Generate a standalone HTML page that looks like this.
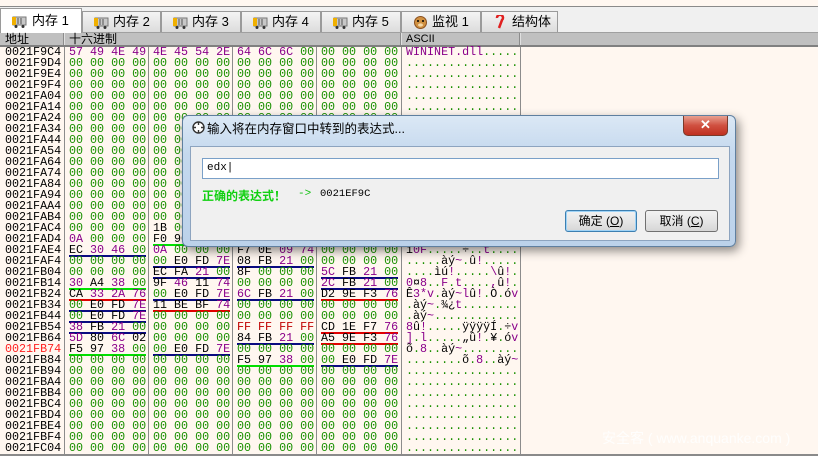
<!DOCTYPE html>
<html><head><meta charset="utf-8"><style>
*{margin:0;padding:0;box-sizing:border-box}
body{width:818px;height:456px;overflow:hidden;background:#fff7f0;position:relative;font-family:"Liberation Mono",monospace;font-size:11.7px}
.top{position:absolute;left:0;top:0;width:818px;height:7px;background:#fff7f0;border-bottom:1px solid #8a8a8a;overflow:hidden}
.tabbar{position:absolute;left:0;top:7px;width:818px;height:26px;background:#f0f0f0;border-bottom:1px solid #a0a0a0}
.tab{position:absolute;top:4px;height:21px;border:1px solid #9a9a9a;border-bottom:none;background:linear-gradient(#f4f4f4,#dcdcdc);font-family:"Liberation Sans","Noto Sans CJK SC",sans-serif;font-size:13px;line-height:20px;color:#000;padding-left:30px;white-space:nowrap}
.tab.act{top:1px;height:25px;background:#fff;padding-left:31px;line-height:24px}
.ic{position:absolute;left:11px;top:5px;width:15px;height:12px}
.act .ic{top:7px}
.hdr{position:absolute;left:0;top:33px;width:818px;height:14px;background:#c0c0c0;border-bottom:2px solid #808080;font-family:"Liberation Sans","Noto Sans CJK SC",sans-serif;font-size:12px;line-height:13px}
.hdr span{position:absolute;top:0}
.hs{position:absolute;top:33px;width:2px;height:12px;background:#8c8c8c;border-right:1px solid #e0e0e0}
.vl{position:absolute;top:47px;width:1px;height:409px;background:#8c8c8c}
.r{position:absolute;left:0;height:11px;line-height:11px;width:520px;white-space:pre;color:#1a9000}
.a{position:absolute;left:5px;color:#000}
.g{position:absolute}
.g1{left:69px}.g2{left:153px}.g3{left:237px}.g4{left:321px}.s{position:absolute;left:406px;color:#1a9000}
.p{color:#8a008a}.k{color:#000}.f{color:#c00000}
.un:after,.ur:after,.ug:after{content:"";position:absolute;left:0;top:10px;width:77px;height:2px}
.un:after{background:#0a0a80}.ur:after{background:#e00000}.ug:after{background:#00e000}
.dlg{position:absolute;left:182px;top:115px;width:554px;height:132px;border:1px solid #5f7f9f;border-radius:6px;background:linear-gradient(#dbe8f5,#c4d8ee 30%,#bcd2ea);box-shadow:3px 4px 10px rgba(0,0,0,.45)}
.body{position:absolute;left:7px;top:30px;width:540px;height:95px;background:#f0f0f0;border:1px solid #8da4bf}
.ttl{position:absolute;left:24px;top:2px;font-family:"Liberation Sans","Noto Sans CJK SC",sans-serif;font-size:12.5px;color:#000}
.cls{position:absolute;left:500px;top:0px;width:45px;height:20px;border:1px solid #7a3a2a;border-top:none;border-radius:0 0 5px 5px;background:linear-gradient(#e8a090,#d05040 50%,#c03020);color:#fff;font:bold 13px "Liberation Sans",sans-serif;text-align:center;line-height:18px}
.inp{position:absolute;left:11px;top:11px;width:517px;height:21px;background:#fff;border:1px solid #7aa0c8;font-size:11px;line-height:19px;padding-left:4px}
.ok,.cn{position:absolute;top:63px;height:22px;border:1px solid #707070;border-radius:3px;background:linear-gradient(#f2f2f2,#e6e6e6 50%,#d6d6d6);font-family:"Liberation Sans","Noto Sans CJK SC",sans-serif;font-size:12px;line-height:20px;text-align:center}
.ok{left:374px;width:72px;border-color:#3c7fb1;box-shadow:inset 0 0 0 1px #9fd3f6}
.cn{left:454px;width:73px}
</style></head><body>
<div class="top"></div>
<div class="tabbar">
<div class="tab act" style="left:0;width:82px"><svg class="ic" viewBox="0 0 15 12"><rect x="1" y="1" width="13" height="8" fill="#c8c8c8" stroke="#777"/><rect x="0" y="1" width="4" height="8" fill="#f0b000"/><line x1="6" y1="2" x2="6" y2="8" stroke="#555"/><line x1="9" y1="2" x2="9" y2="8" stroke="#555"/><circle cx="4" cy="10.5" r="1.5" fill="#333"/><circle cx="11" cy="10.5" r="1.5" fill="#333"/></svg>内存 1</div>
<div class="tab" style="left:82px;width:79px"><svg class="ic" viewBox="0 0 15 12"><rect x="1" y="1" width="13" height="8" fill="#c8c8c8" stroke="#777"/><rect x="0" y="1" width="4" height="8" fill="#f0b000"/><line x1="6" y1="2" x2="6" y2="8" stroke="#555"/><line x1="9" y1="2" x2="9" y2="8" stroke="#555"/><circle cx="4" cy="10.5" r="1.5" fill="#333"/><circle cx="11" cy="10.5" r="1.5" fill="#333"/></svg>内存 2</div>
<div class="tab" style="left:161px;width:80px"><svg class="ic" viewBox="0 0 15 12"><rect x="1" y="1" width="13" height="8" fill="#c8c8c8" stroke="#777"/><rect x="0" y="1" width="4" height="8" fill="#f0b000"/><line x1="6" y1="2" x2="6" y2="8" stroke="#555"/><line x1="9" y1="2" x2="9" y2="8" stroke="#555"/><circle cx="4" cy="10.5" r="1.5" fill="#333"/><circle cx="11" cy="10.5" r="1.5" fill="#333"/></svg>内存 3</div>
<div class="tab" style="left:241px;width:80px"><svg class="ic" viewBox="0 0 15 12"><rect x="1" y="1" width="13" height="8" fill="#c8c8c8" stroke="#777"/><rect x="0" y="1" width="4" height="8" fill="#f0b000"/><line x1="6" y1="2" x2="6" y2="8" stroke="#555"/><line x1="9" y1="2" x2="9" y2="8" stroke="#555"/><circle cx="4" cy="10.5" r="1.5" fill="#333"/><circle cx="11" cy="10.5" r="1.5" fill="#333"/></svg>内存 4</div>
<div class="tab" style="left:321px;width:80px"><svg class="ic" viewBox="0 0 15 12"><rect x="1" y="1" width="13" height="8" fill="#c8c8c8" stroke="#777"/><rect x="0" y="1" width="4" height="8" fill="#f0b000"/><line x1="6" y1="2" x2="6" y2="8" stroke="#555"/><line x1="9" y1="2" x2="9" y2="8" stroke="#555"/><circle cx="4" cy="10.5" r="1.5" fill="#333"/><circle cx="11" cy="10.5" r="1.5" fill="#333"/></svg>内存 5</div>
<div class="tab" style="left:401px;width:80px"><svg class="ic" viewBox="0 0 15 14" style="height:14px;top:3px"><circle cx="7.5" cy="7.5" r="6" fill="#d09040" stroke="#8a5020"/><circle cx="5" cy="6" r="1" fill="#000"/><circle cx="10" cy="6" r="1" fill="#000"/><ellipse cx="7.5" cy="10" rx="2.5" ry="1.6" fill="#f4d8a8"/></svg>监视 1</div>
<div class="tab" style="left:481px;width:77px"><svg class="ic" viewBox="0 0 15 14" style="height:14px;top:3px"><path d="M6 13 L9 5 A3 3 0 1 0 4 3" fill="none" stroke="#e02020" stroke-width="2.5"/></svg>结构体</div>
</div>
<div class="hdr"><span style="left:5px">地址</span><span style="left:69px">十六进制</span><span style="left:406px;font-family:'Liberation Sans',sans-serif;font-size:11px">ASCII</span></div>
<div class="hs" style="left:63px"></div><div class="hs" style="left:400px"></div><div class="hs" style="left:519px"></div>
<div class="vl" style="left:64px"></div><div class="vl" style="left:148px"></div><div class="vl" style="left:232px"></div><div class="vl" style="left:316px"></div><div class="vl" style="left:401px"></div><div class="vl" style="left:520px"></div>

<div class="r" style="top:47px"><span class="a">0021F9C4</span><span class="g g1 p">57 49 4E 49</span><span class="g g2 p">4E 45 54 2E</span><span class="g g3"><span class="p">64 6C 6C</span> 00</span><span class="g g4">00 00 00 00</span><span class="s"><span class="p">WININET.dll</span>.....</span></div>
<div class="r" style="top:58px"><span class="a">0021F9D4</span><span class="g g1">00 00 00 00</span><span class="g g2">00 00 00 00</span><span class="g g3">00 00 00 00</span><span class="g g4">00 00 00 00</span><span class="s">................</span></div>
<div class="r" style="top:69px"><span class="a">0021F9E4</span><span class="g g1">00 00 00 00</span><span class="g g2">00 00 00 00</span><span class="g g3">00 00 00 00</span><span class="g g4">00 00 00 00</span><span class="s">................</span></div>
<div class="r" style="top:80px"><span class="a">0021F9F4</span><span class="g g1">00 00 00 00</span><span class="g g2">00 00 00 00</span><span class="g g3">00 00 00 00</span><span class="g g4">00 00 00 00</span><span class="s">................</span></div>
<div class="r" style="top:91px"><span class="a">0021FA04</span><span class="g g1">00 00 00 00</span><span class="g g2">00 00 00 00</span><span class="g g3">00 00 00 00</span><span class="g g4">00 00 00 00</span><span class="s">................</span></div>
<div class="r" style="top:102px"><span class="a">0021FA14</span><span class="g g1">00 00 00 00</span><span class="g g2">00 00 00 00</span><span class="g g3">00 00 00 00</span><span class="g g4">00 00 00 00</span><span class="s">................</span></div>
<div class="r" style="top:113px"><span class="a">0021FA24</span><span class="g g1">00 00 00 00</span><span class="g g2">00 00 00 00</span><span class="g g3">00 00 00 00</span><span class="g g4">00 00 00 00</span><span class="s">................</span></div>
<div class="r" style="top:124px"><span class="a">0021FA34</span><span class="g g1">00 00 00 00</span><span class="g g2">00 00 00 00</span><span class="g g3">00 00 00 00</span><span class="g g4">00 00 00 00</span><span class="s">................</span></div>
<div class="r" style="top:135px"><span class="a">0021FA44</span><span class="g g1">00 00 00 00</span><span class="g g2">00 00 00 00</span><span class="g g3">00 00 00 00</span><span class="g g4">00 00 00 00</span><span class="s">................</span></div>
<div class="r" style="top:146px"><span class="a">0021FA54</span><span class="g g1">00 00 00 00</span><span class="g g2">00 00 00 00</span><span class="g g3">00 00 00 00</span><span class="g g4">00 00 00 00</span><span class="s">................</span></div>
<div class="r" style="top:157px"><span class="a">0021FA64</span><span class="g g1">00 00 00 00</span><span class="g g2">00 00 00 00</span><span class="g g3">00 00 00 00</span><span class="g g4">00 00 00 00</span><span class="s">................</span></div>
<div class="r" style="top:168px"><span class="a">0021FA74</span><span class="g g1">00 00 00 00</span><span class="g g2">00 00 00 00</span><span class="g g3">00 00 00 00</span><span class="g g4">00 00 00 00</span><span class="s">................</span></div>
<div class="r" style="top:179px"><span class="a">0021FA84</span><span class="g g1">00 00 00 00</span><span class="g g2">00 00 00 00</span><span class="g g3">00 00 00 00</span><span class="g g4">00 00 00 00</span><span class="s">................</span></div>
<div class="r" style="top:190px"><span class="a">0021FA94</span><span class="g g1">00 00 00 00</span><span class="g g2">00 00 00 00</span><span class="g g3">00 00 00 00</span><span class="g g4">00 00 00 00</span><span class="s">................</span></div>
<div class="r" style="top:201px"><span class="a">0021FAA4</span><span class="g g1">00 00 00 00</span><span class="g g2">00 00 00 00</span><span class="g g3">00 00 00 00</span><span class="g g4">00 00 00 00</span><span class="s">................</span></div>
<div class="r" style="top:212px"><span class="a">0021FAB4</span><span class="g g1">00 00 00 00</span><span class="g g2">00 00 00 00</span><span class="g g3">00 00 00 00</span><span class="g g4">00 00 00 00</span><span class="s">................</span></div>
<div class="r" style="top:223px"><span class="a">0021FAC4</span><span class="g g1">00 00 00 00</span><span class="g g2"><span class="k">1B</span> 00 00 00</span><span class="g g3">00 00 00 00</span><span class="g g4">00 00 00 00</span><span class="s">................</span></div>
<div class="r" style="top:234px"><span class="a">0021FAD4</span><span class="g g1"><span class="p">0A</span> 00 00 00</span><span class="g g2 ug"><span class="k">F0 90</span> 00 00</span><span class="g g3 un">00 00 00 00</span><span class="g g4">00 00 00 00</span><span class="s">................</span></div>
<div class="r" style="top:245px"><span class="a">0021FAE4</span><span class="g g1 un"><span class="k">EC</span> <span class="p">30 46</span> 00</span><span class="g g2"><span class="p">0A</span> 00 00 00</span><span class="g g3"><span class="k">F7 0E</span> <span class="p">09 74</span></span><span class="g g4">00 00 00 00</span><span class="s"><span class="k">ì</span><span class="p">0F</span>.....<span class="k">÷</span>..<span class="p">t</span>....</span></div>
<div class="r" style="top:256px"><span class="a">0021FAF4</span><span class="g g1">00 00 00 00</span><span class="g g2 un">00 <span class="k">E0 FD</span> <span class="p">7E</span></span><span class="g g3 un"><span class="k">08 FB</span> <span class="p">21</span> 00</span><span class="g g4">00 00 00 00</span><span class="s">.....<span class="k">àý</span><span class="p">~</span>.<span class="k">û</span><span class="p">!</span>.....</span></div>
<div class="r" style="top:267px"><span class="a">0021FB04</span><span class="g g1">00 00 00 00</span><span class="g g2 un"><span class="k">EC FA</span> <span class="p">21</span> 00</span><span class="g g3"><span class="k">8F</span> 00 00 00</span><span class="g g4 un"><span class="p">5C</span> <span class="k">FB</span> <span class="p">21</span> 00</span><span class="s">....<span class="k">ìú</span><span class="p">!</span>.....<span class="p">\</span><span class="k">û</span><span class="p">!</span>.</span></div>
<div class="r" style="top:278px"><span class="a">0021FB14</span><span class="g g1 ug"><span class="p">30</span> <span class="k">A4</span> <span class="p">38</span> 00</span><span class="g g2"><span class="k">9F</span> <span class="p">46</span> <span class="k">11</span> <span class="p">74</span></span><span class="g g3">00 00 00 00</span><span class="g g4 un"><span class="p">2C</span> <span class="k">FB</span> <span class="p">21</span> 00</span><span class="s"><span class="p">0</span><span class="k">¤</span><span class="p">8</span>..<span class="p">F</span>.<span class="p">t</span>....<span class="p">,</span><span class="k">û</span><span class="p">!</span>.</span></div>
<div class="r" style="top:289px"><span class="a">0021FB24</span><span class="g g1 ur"><span class="k">CA</span> <span class="p">33 2A 76</span></span><span class="g g2 un">00 <span class="k">E0 FD</span> <span class="p">7E</span></span><span class="g g3 un"><span class="p">6C</span> <span class="k">FB</span> <span class="p">21</span> 00</span><span class="g g4 ur"><span class="k">D2 9E F3</span> <span class="p">76</span></span><span class="s"><span class="k">Ê</span><span class="p">3*v</span>.<span class="k">àý</span><span class="p">~l</span><span class="k">û</span><span class="p">!</span>.<span class="k">Ò</span>.<span class="k">ó</span><span class="p">v</span></span></div>
<div class="r" style="top:300px"><span class="a">0021FB34</span><span class="g g1 un">00 <span class="k">E0 FD</span> <span class="p">7E</span></span><span class="g g2 ur"><span class="k">11 BE BF</span> <span class="p">74</span></span><span class="g g3">00 00 00 00</span><span class="g g4">00 00 00 00</span><span class="s">.<span class="k">àý</span><span class="p">~</span>.<span class="k">¾¿</span><span class="p">t</span>........</span></div>
<div class="r" style="top:311px"><span class="a">0021FB44</span><span class="g g1 un">00 <span class="k">E0 FD</span> <span class="p">7E</span></span><span class="g g2">00 00 00 00</span><span class="g g3">00 00 00 00</span><span class="g g4">00 00 00 00</span><span class="s">.<span class="k">àý</span><span class="p">~</span>............</span></div>
<div class="r" style="top:322px"><span class="a">0021FB54</span><span class="g g1 un"><span class="p">38</span> <span class="k">FB</span> <span class="p">21</span> 00</span><span class="g g2">00 00 00 00</span><span class="g g3 f">FF FF FF FF</span><span class="g g4 ur"><span class="k">CD 1E F7</span> <span class="p">76</span></span><span class="s"><span class="p">8</span><span class="k">û</span><span class="p">!</span>.....<span class="k">ÿÿÿÿÍ</span>.<span class="k">÷</span><span class="p">v</span></span></div>
<div class="r" style="top:333px"><span class="a">0021FB64</span><span class="g g1"><span class="p">5D</span> <span class="k">80</span> <span class="p">6C</span> <span class="k">02</span></span><span class="g g2">00 00 00 00</span><span class="g g3 un"><span class="k">84 FB</span> <span class="p">21</span> 00</span><span class="g g4 ur"><span class="k">A5 9E F3</span> <span class="p">76</span></span><span class="s"><span class="p">]</span>.<span class="p">l</span>.....<span class="k">„û</span><span class="p">!</span>.<span class="k">¥</span>.<span class="k">ó</span><span class="p">v</span></span></div>
<div class="r" style="top:344px"><span class="a" style="color:#ff2020">0021FB74</span><span class="g g1 ug"><span class="k">F5 97</span> <span class="p">38</span> 00</span><span class="g g2 un">00 <span class="k">E0 FD</span> <span class="p">7E</span></span><span class="g g3">00 00 00 00</span><span class="g g4">00 00 00 00</span><span class="s"><span class="k">õ</span>.<span class="p">8</span>..<span class="k">àý</span><span class="p">~</span>........</span></div>
<div class="r" style="top:355px"><span class="a">0021FB84</span><span class="g g1">00 00 00 00</span><span class="g g2">00 00 00 00</span><span class="g g3 ug"><span class="k">F5 97</span> <span class="p">38</span> 00</span><span class="g g4 un">00 <span class="k">E0 FD</span> <span class="p">7E</span></span><span class="s">........<span class="k">õ</span>.<span class="p">8</span>..<span class="k">àý</span><span class="p">~</span></span></div>
<div class="r" style="top:366px"><span class="a">0021FB94</span><span class="g g1">00 00 00 00</span><span class="g g2">00 00 00 00</span><span class="g g3">00 00 00 00</span><span class="g g4">00 00 00 00</span><span class="s">................</span></div>
<div class="r" style="top:377px"><span class="a">0021FBA4</span><span class="g g1">00 00 00 00</span><span class="g g2">00 00 00 00</span><span class="g g3">00 00 00 00</span><span class="g g4">00 00 00 00</span><span class="s">................</span></div>
<div class="r" style="top:388px"><span class="a">0021FBB4</span><span class="g g1">00 00 00 00</span><span class="g g2">00 00 00 00</span><span class="g g3">00 00 00 00</span><span class="g g4">00 00 00 00</span><span class="s">................</span></div>
<div class="r" style="top:399px"><span class="a">0021FBC4</span><span class="g g1">00 00 00 00</span><span class="g g2">00 00 00 00</span><span class="g g3">00 00 00 00</span><span class="g g4">00 00 00 00</span><span class="s">................</span></div>
<div class="r" style="top:410px"><span class="a">0021FBD4</span><span class="g g1">00 00 00 00</span><span class="g g2">00 00 00 00</span><span class="g g3">00 00 00 00</span><span class="g g4">00 00 00 00</span><span class="s">................</span></div>
<div class="r" style="top:421px"><span class="a">0021FBE4</span><span class="g g1">00 00 00 00</span><span class="g g2">00 00 00 00</span><span class="g g3">00 00 00 00</span><span class="g g4">00 00 00 00</span><span class="s">................</span></div>
<div class="r" style="top:432px"><span class="a">0021FBF4</span><span class="g g1">00 00 00 00</span><span class="g g2">00 00 00 00</span><span class="g g3">00 00 00 00</span><span class="g g4">00 00 00 00</span><span class="s">................</span></div>
<div class="r" style="top:443px"><span class="a">0021FC04</span><span class="g g1">00 00 00 00</span><span class="g g2">00 00 00 00</span><span class="g g3">00 00 00 00</span><span class="g g4">00 00 00 00</span><span class="s">................</span></div>
<div style="position:absolute;left:0;top:454px;width:818px;height:2px;background:#8a8a8a"></div>
<div style="position:absolute;left:602px;top:428px;color:#fff;font-family:'Liberation Sans','Noto Sans CJK SC',sans-serif;font-size:14px;opacity:.9">安全客 ( www.anquanke.com )</div>

<div class="dlg">
<svg style="position:absolute;left:9px;top:5px" width="13" height="13" viewBox="0 0 13 13"><circle cx="6.5" cy="6.5" r="5.5" fill="#fff" stroke="#333" stroke-width="1.4"/><path d="M6.5 1v3M6.5 9v3M1 6.5h3M9 6.5h3" stroke="#333" stroke-width="1.4"/></svg>
<div class="ttl">输入将在内存窗口中转到的表达式...</div>
<div class="cls">✕</div>
<div class="body">
<div class="inp">edx|</div>
<div style="position:absolute;left:11px;top:40px;font-family:'Liberation Sans','Noto Sans CJK SC',sans-serif;font-size:12px;font-weight:bold;color:#10d010">正确的表达式！</div>
<div style="position:absolute;left:107px;top:41px;font-size:11px;color:#10c010">-&gt;</div>
<div style="position:absolute;left:129px;top:41px;font-size:10.5px;color:#000">0021EF9C</div>
<div class="ok">确定 (<u>O</u>)</div>
<div class="cn">取消 (<u>C</u>)</div>
</div>
</div>
</body></html>
